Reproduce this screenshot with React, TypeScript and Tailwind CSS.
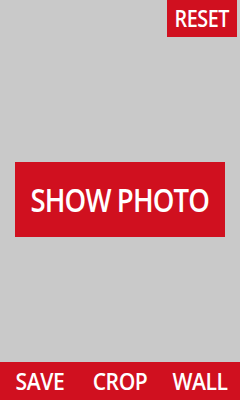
import React from "react";

export default function App() {
  const font = { fontFamily: '"Open Sans", "Noto Sans", sans-serif' };
  return (
    <div className="w-[240px] h-[400px] bg-[#c9c9c9] flex flex-col" style={font}>
      <div className="flex justify-end pr-[3px]">
        <div className="w-[70px] h-[37px] bg-[#d0101f] flex items-center justify-center text-white text-[23px] font-semibold">
          <span className="inline-block scale-x-[0.86] tracking-[-0.5px]">RESET</span>
        </div>
      </div>
      <div className="flex-1 flex items-center justify-center">
        <div className="w-[210px] h-[75px] bg-[#d0101f] flex items-center justify-center text-white text-[32px] font-semibold">
          <span className="inline-block scale-x-[0.86] tracking-[-1px] whitespace-nowrap">SHOW PHOTO</span>
        </div>
      </div>
      <div className="h-[38px] bg-[#d0101f] flex items-center text-white text-[24px] font-semibold">
        <span className="w-[80px] text-center inline-block scale-x-[0.88] tracking-[-0.5px]">SAVE</span>
        <span className="w-[80px] text-center inline-block scale-x-[0.88] tracking-[-0.5px]">CROP</span>
        <span className="w-[80px] text-center inline-block scale-x-[0.88] tracking-[-0.5px]">WALL</span>
      </div>
    </div>
  );
}
